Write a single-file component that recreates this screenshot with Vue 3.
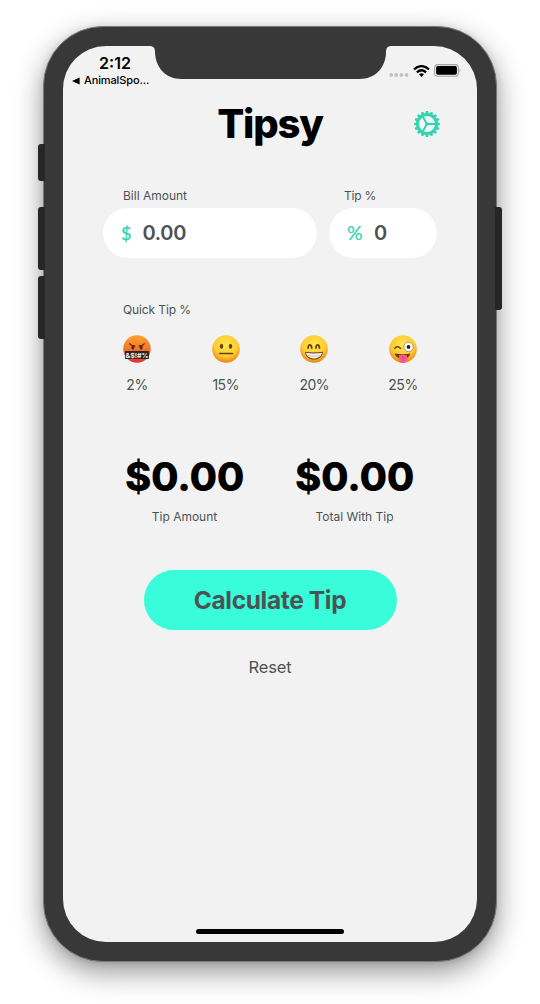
<script setup>
import { ref } from 'vue'

const bill = ref('0.00')
const tip = ref('0')
const tipAmount = ref('$0.00')
const total = ref('$0.00')
const quickTips = [
  { face: 'angry', value: 2 },
  { face: 'neutral', value: 15 },
  { face: 'grin', value: 20 },
  { face: 'wink', value: 25 },
]
const teeth = Array.from({ length: 16 }, (_, i) => i * 22.5)
</script>

<template>
  <div class="stage">
    <div class="phone">
      <i class="key mute"></i>
      <i class="key vol-up"></i>
      <i class="key vol-down"></i>
      <i class="key power"></i>
      <div class="screen">
        <svg class="notch" viewBox="0 0 244 33" width="244" height="33">
          <path d="M0 0C4 0 6 1.500 6 6C6.500 22 17 33 32.500 33H210.500C226 33 236.800 22 237 6C237 1.500 239 0 243 0Z" fill="#383838" />
        </svg>

        <header class="status">
          <div class="clock">
            <div class="time">2:12</div>
            <div class="back">
              <svg width="8" height="8" viewBox="0 0 8 8"><path d="M0 4L7.600 .4V7.600Z" /></svg>
              <span>AnimalSpo...</span>
            </div>
          </div>
          <div class="signals">
            <svg class="dots" width="20" height="4" viewBox="0 0 20 4" fill="#c2c2c2">
              <circle cx="2.200" cy="2" r="1.900" /><circle cx="7.300" cy="2" r="1.900" />
              <circle cx="12.400" cy="2" r="1.900" /><circle cx="17.500" cy="2" r="1.900" />
            </svg>
            <svg class="wifi" width="17" height="12" viewBox="0 0 17 12">
              <g fill="none" stroke="#000" stroke-width="2.300">
                <path d="M1 4.400Q8.500 -2.100 16 4.400" />
                <path d="M3.900 7.400Q8.500 3.200 13.100 7.400" />
              </g>
              <path d="M6 9.300Q8.500 7.300 11 9.300L8.500 11.900Z" />
            </svg>
            <svg class="battery" width="27" height="13" viewBox="0 0 27 13">
              <rect x=".6" y=".6" width="23.800" height="11.600" rx="3.300" fill="none" stroke="#a3a3a3" stroke-width="1.100" />
              <rect x="2.100" y="2.100" width="20.800" height="8.700" rx="1.800" />
              <path d="M25.500 4.400Q27.200 6.400 25.500 8.400Z" fill="#999" />
            </svg>
          </div>
        </header>

        <main>
          <div class="title-row">
            <h1>Tipsy</h1>
            <button class="gear" aria-label="Settings">
              <svg width="26" height="26" viewBox="-13 -13 26 26" fill="#31d4b1" stroke="#31d4b1">
                <path v-for="a in teeth" :key="a" d="M-1.600 -10.500L-1.100 -12.900H1.100L1.600 -10.500Z" stroke="none" :transform="`rotate(${a})`" />
                <circle r="9.500" fill="none" stroke-width="3" />
                <path d="M0 0H9M0 0L-4.500 -7.800M0 0L-4.500 7.800" stroke-width="1.900" />
                <circle r="1.700" stroke="none" />
              </svg>
            </button>
          </div>

          <div class="fields">
            <label class="bill">
              <span class="label">Bill Amount</span>
              <span class="pill"><b class="sign dollar">$</b><span class="value">{{ bill }}</span></span>
            </label>
            <label class="tip">
              <span class="label">Tip %</span>
              <span class="pill"><b class="sign percent">%</b><span class="value">{{ tip }}</span></span>
            </label>
          </div>

          <div class="label quick-label">Quick Tip %</div>
          <svg class="defs" width="0" height="0">
            <defs>
              <radialGradient id="yellow" cx=".5" cy=".35" r=".67">
                <stop offset="0" stop-color="#ffe64d" /><stop offset=".62" stop-color="#ffcb32" />
                <stop offset="1" stop-color="#e97c16" />
              </radialGradient>
              <linearGradient id="red" x1="0" y1="0" x2="0" y2="1">
                <stop offset="0" stop-color="#f9a22c" /><stop offset=".45" stop-color="#f67b2c" />
                <stop offset="1" stop-color="#e42e2c" />
              </linearGradient>
            </defs>
          </svg>
          <div class="quick">
            <div v-for="q in quickTips" :key="q.value" class="choice">
              <svg width="28" height="28" viewBox="0 0 28 28">
                <circle cx="14" cy="14" r="13.800" :fill="q.face === 'angry' ? 'url(#red)' : 'url(#yellow)'" />
                <g v-if="q.face === 'angry'">
                  <g fill="none" stroke="#632312" stroke-width="1.300" stroke-linecap="round">
                    <path d="M6.800 8.800Q8.500 11 11.800 11" /><path d="M21.200 8.800Q19.500 11 16.200 11" />
                  </g>
                  <ellipse cx="9.900" cy="12.600" rx="1.500" ry="2.100" fill="#632312" />
                  <ellipse cx="18.100" cy="12.600" rx="1.500" ry="2.100" fill="#632312" />
                  <rect x="2" y="16" width="24" height="8" rx=".7" fill="#292725" />
                  <text x="14" y="22.600" text-anchor="middle" textLength="23" lengthAdjust="spacingAndGlyphs" class="swear">&amp;$!#%</text>
                </g>
                <g v-else-if="q.face === 'neutral'" fill="#67400c">
                  <ellipse cx="9.500" cy="11.200" rx="1.700" ry="2.500" /><ellipse cx="18.500" cy="11.200" rx="1.700" ry="2.500" />
                  <path d="M7.500 18.500H20.500" stroke="#67400c" stroke-width="1.500" stroke-linecap="round" />
                </g>
                <g v-else-if="q.face === 'grin'">
                  <g fill="none" stroke="#67400c" stroke-width="1.800" stroke-linecap="round">
                    <path d="M8.100 13Q8.400 9.900 9.900 9.900T11.700 13" /><path d="M15.900 13Q16.200 9.900 17.700 9.900T19.500 13" />
                  </g>
                  <path d="M5 16.800Q14 18.200 23 16.800C22.600 21.600 19 24.600 14 24.600S5.400 21.600 5 16.800Z" fill="#6d3a14" />
                  <path d="M5.900 17.800Q14 19 22.100 17.800C21.500 21.200 18 23.600 14 23.600S6.500 21.200 5.900 17.800Z" fill="#f3f1ed" />
                  <path d="M7.200 20.600Q14 21.700 20.800 20.600" fill="none" stroke="#bdbab5" stroke-width=".7" />
                </g>
                <g v-else>
                  <path d="M5.800 13.400Q7 11.400 8.800 11.700T11.500 13.400" fill="none" stroke="#67400c" stroke-width="1.500" stroke-linecap="round" />
                  <circle cx="19.500" cy="11.900" r="4.700" fill="#fff" stroke="#a88d62" stroke-width=".9" />
                  <circle cx="19.500" cy="11.900" r="1.900" fill="#241d18" />
                  <path d="M5.600 18.600Q14 20 21.500 18.600C20.500 22 18 24 14 24S6.600 22 5.600 18.600Z" fill="#76350f" />
                  <path d="M10 20.200Q14 19.200 18 20.200V24.500Q17.500 28 14 28T10 24.500Z" fill="#fb5593" />
                  <path d="M14 21.500V25" stroke="#d43470" stroke-width=".8" />
                </g>
              </svg>
              <span>{{ q.value }}%</span>
            </div>
          </div>

          <div class="results">
            <div><strong>{{ tipAmount }}</strong><span>Tip Amount</span></div>
            <div><strong>{{ total }}</strong><span>Total With Tip</span></div>
          </div>

          <button class="calculate">Calculate Tip</button>
          <button class="reset">Reset</button>
        </main>
        <div class="home"></div>
      </div>
    </div>
  </div>
</template>

<style>
body { background: #fff; }
</style>

<style scoped>
* { box-sizing: border-box; }
button { border: 0; padding: 0; background: none; font: inherit; color: inherit; }
.stage {
  width: 540px;
  height: 1004px;
  padding: 26px 43px;
  overflow: hidden;
  background: #fff;
  color: #4c5353;
  font-family: Inter, "Liberation Sans", sans-serif;
}
.phone {
  position: relative;
  width: 454px;
  height: 936px;
  padding: 19px;
  border: 1px solid #797979;
  border-radius: 60px;
  background: #383838;
  box-shadow: 0 10px 28px rgba(0, 0, 0, .42), 0 1px 6px rgba(0, 0, 0, .1);
}
.key { position: absolute; left: -6px; width: 7px; border-radius: 3px 0 0 3px; background: #262626; }
.mute { top: 117px; height: 37px; }
.vol-up { top: 180px; height: 63px; }
.vol-down { top: 249px; height: 63px; }
.power { top: 180px; left: auto; right: -6px; height: 103px; border-radius: 0 3px 3px 0; }
.screen {
  position: relative;
  display: flex;
  flex-direction: column;
  width: 414px;
  height: 896px;
  border-radius: 43px;
  background: #f2f2f2;
  overflow: hidden;
}
.notch { position: absolute; top: 0; left: 86px; }
.status { display: flex; justify-content: space-between; height: 44px; color: #000; }
.clock { padding: 7px 0 0 9px; }
.time { width: 86px; text-align: center; font-size: 16px; line-height: 21px; font-weight: 600; letter-spacing: 0; }
.back { display: flex; align-items: center; gap: 4px; font-size: 11px; line-height: 13px; font-weight: 500; letter-spacing: -.12px; }
.signals { display: flex; align-items: flex-start; padding: 18px 16.500px 0 0; }
.dots { margin: 9px 4px 0 0; }
.wifi { margin: 1px 4px 0 0; }
main { display: flex; flex-direction: column; padding: 0 40px; }
.title-row { display: flex; justify-content: center; align-items: center; height: 68px; position: relative; }
h1 { margin: 0; font-size: 40px; line-height: 48px; font-weight: 800; color: #000; letter-spacing: -1.200px; }
.gear { position: absolute; right: -3px; top: 21px; height: 26px; }
.gear svg, .choice svg { display: block; }
.fields { display: flex; gap: 12px; margin-top: 30px; }
.label { display: block; font-size: 12px; line-height: 16px; letter-spacing: 0; }
.fields .label { margin-bottom: 4px; }
.bill { width: 214px; }
.bill .label { padding-left: 20px; }
.tip { width: 108px; }
.tip .label { padding-left: 15px; letter-spacing: -.2px; }
.pill { display: flex; align-items: center; height: 50px; border-radius: 25px; background: #fff; padding-left: 18px; }
.sign { font-family: Lato, sans-serif; font-weight: 400; color: #31d4b1; line-height: 20px; }
.dollar { width: 21.500px; font-size: 18px; -webkit-text-stroke: .35px #31d4b1; }
.percent { width: 27px; font-size: 19.500px; -webkit-text-stroke: .2px #31d4b1; }
.value { font-size: 20px; line-height: 24px; font-weight: 600; letter-spacing: -.3px; }
.quick-label { margin: 44px 0 0 20px; letter-spacing: -.12px; }
.defs { position: absolute; }
.quick { display: flex; justify-content: space-between; margin: 17px 20px 0; }
.choice { width: 28px; display: flex; flex-direction: column; align-items: center; }
.choice span { margin-top: 13px; font-size: 14px; line-height: 18px; letter-spacing: -.5px; white-space: nowrap; }
.swear { font: 600 6.500px Inter, sans-serif; fill: #fff; }
.results { display: flex; gap: 51px; padding: 0 22px; margin-top: 59px; }
.results div { width: 119px; display: flex; flex-direction: column; align-items: center; }
.results strong { font-size: 40px; line-height: 48px; font-weight: 800; color: #000; letter-spacing: -.4px; white-space: nowrap; }
.results span { margin-top: 8px; font-size: 12px; line-height: 16px; letter-spacing: 0; white-space: nowrap; }
.calculate { align-self: center; width: 253px; height: 60px; margin-top: 45px; border-radius: 30px; background: #39fcda; font-size: 24.500px; font-weight: 700; letter-spacing: -.35px; }
.reset { align-self: center; margin-top: 26px; font-size: 16.500px; line-height: 22px; letter-spacing: -.1px; }
.home { width: 148px; height: 5px; border-radius: 3px; background: #000; margin: auto auto 8px; }
</style>
